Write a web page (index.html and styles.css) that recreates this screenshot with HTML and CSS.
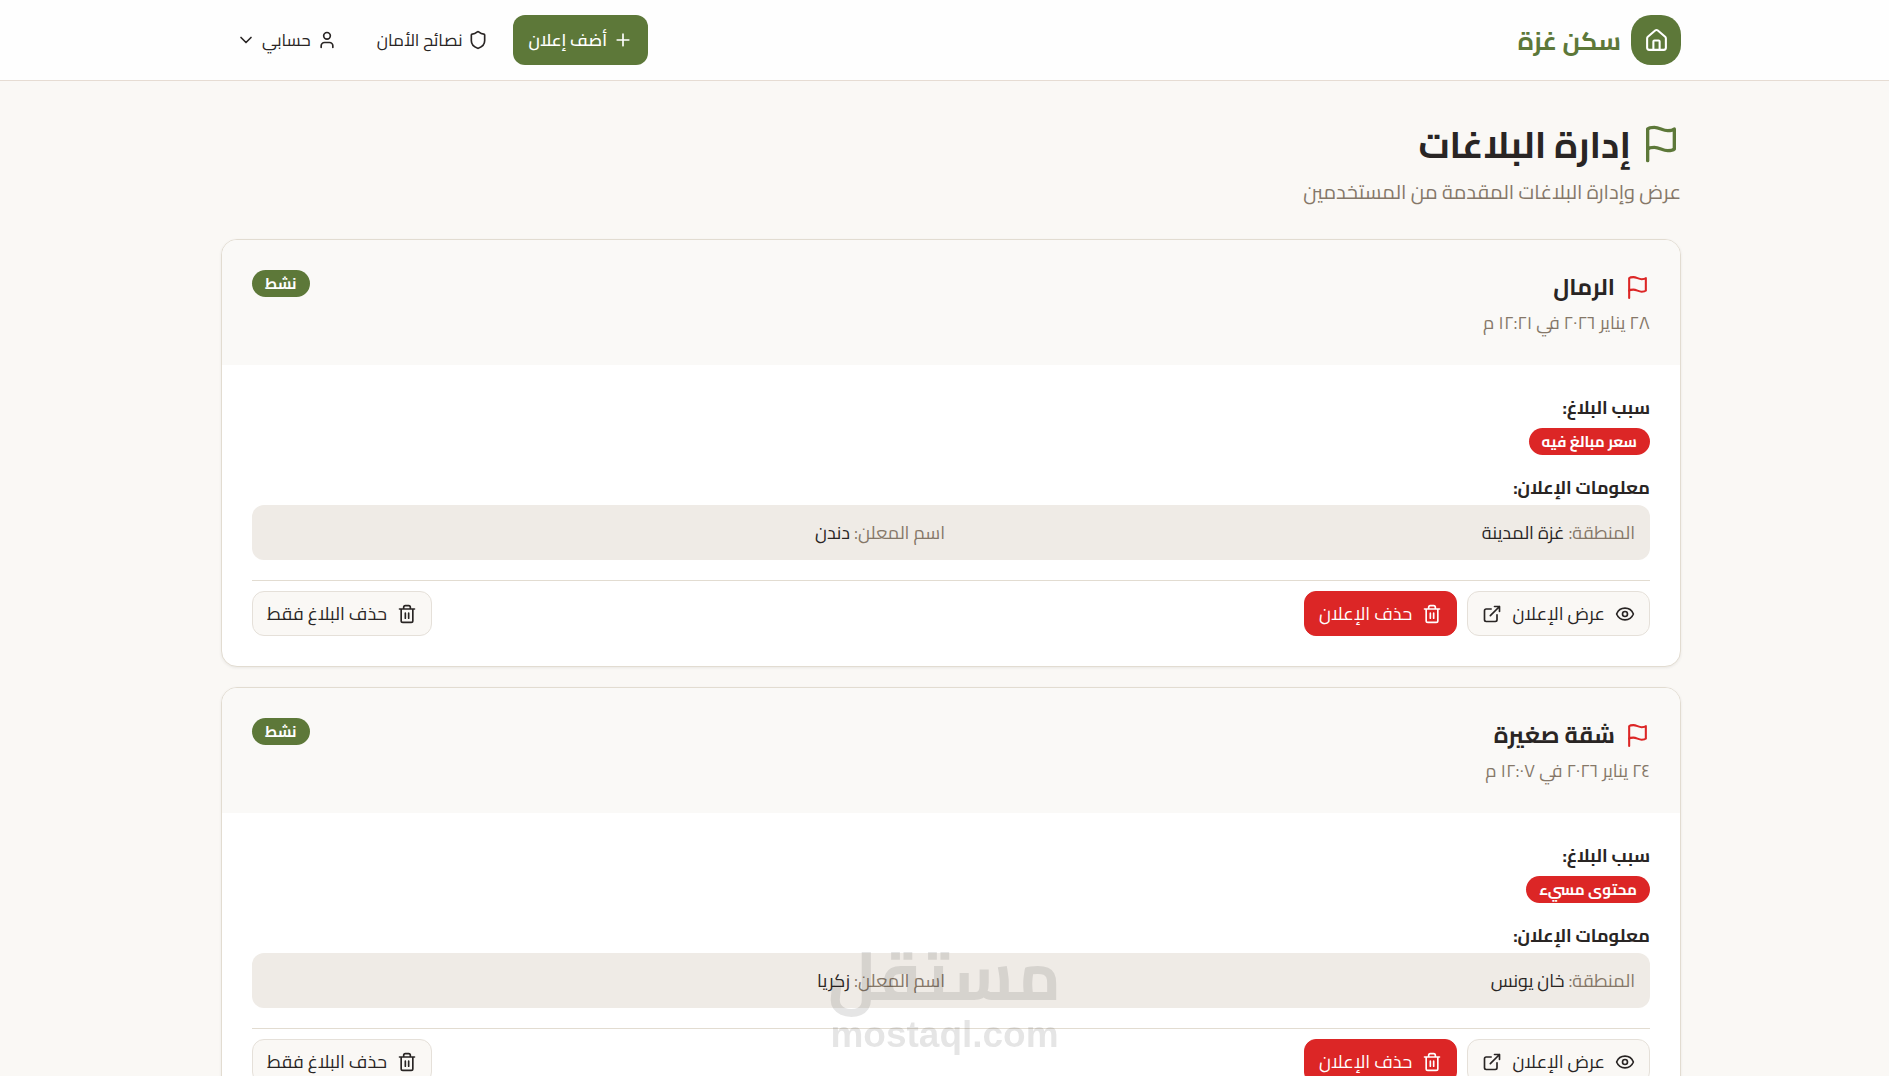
FILE: index.html
```html
<!DOCTYPE html>
<html lang="ar" dir="rtl">
<head>
<meta charset="utf-8">
<meta name="viewport" content="width=device-width, initial-scale=1">
<title>سكن غزة</title>
<link rel="stylesheet" href="styles.css">
</head>
<body>
<svg width="0" height="0" class="sprite" aria-hidden="true">
  <symbol id="flag" viewBox="0 0 24 24"><path d="M4 15s1-1 4-1 5 2 8 2 4-1 4-1V3s-1 1-4 1-5-2-8-2-4 1-4 1z"/><path d="M4 22v-7"/></symbol>
  <symbol id="home" viewBox="0 0 24 24"><path d="M15 21v-8a1 1 0 0 0-1-1h-4a1 1 0 0 0-1 1v8"/><path d="M3 10a2 2 0 0 1 .709-1.528l7-5.999a2 2 0 0 1 2.582 0l7 5.999A2 2 0 0 1 21 10v9a2 2 0 0 1-2 2H5a2 2 0 0 1-2-2z"/></symbol>
  <symbol id="plus" viewBox="0 0 24 24"><path d="M5 12h14M12 5v14"/></symbol>
  <symbol id="shield" viewBox="0 0 24 24"><path d="M20 13c0 5-3.500 7.500-7.660 8.950a1 1 0 0 1-.67-.01C7.500 20.500 4 18 4 13V6a1 1 0 0 1 1-1c2 0 4.500-1.200 6.240-2.720a1.170 1.170 0 0 1 1.520 0C14.510 3.810 17 5 19 5a1 1 0 0 1 1 1z"/></symbol>
  <symbol id="user" viewBox="0 0 24 24"><path d="M19 21v-2a4 4 0 0 0-4-4H9a4 4 0 0 0-4 4v2"/><circle cx="12" cy="7" r="4"/></symbol>
  <symbol id="chevron" viewBox="0 0 24 24"><path d="m6 9 6 6 6-6"/></symbol>
  <symbol id="eye" viewBox="0 0 24 24"><path d="M2.062 12.348a1 1 0 0 1 0-.696 10.750 10.750 0 0 1 19.876 0 1 1 0 0 1 0 .696 10.750 10.750 0 0 1-19.876 0"/><circle cx="12" cy="12" r="3"/></symbol>
  <symbol id="external" viewBox="0 0 24 24"><path d="M15 3h6v6M10 14 21 3M18 13v6a2 2 0 0 1-2 2H5a2 2 0 0 1-2-2V8a2 2 0 0 1 2-2h6"/></symbol>
  <symbol id="trash" viewBox="0 0 24 24"><path d="M3 6h18M19 6v14c0 1-1 2-2 2H7c-1 0-2-1-2-2V6M8 6V4c0-1 1-2 2-2h4c1 0 2 1 2 2v2M10 11v6M14 11v6"/></symbol>
</svg>

<header class="site-header gutter">
  <div class="container header-row">
    <a class="brand" href="#">
      <span class="brand-mark"><svg class="icon icon-md"><use href="#home"/></svg></span>
      <span class="brand-name">سكن غزة</span>
    </a>
    <nav class="nav">
      <a class="nav-add" href="#"><svg class="icon icon-sm"><use href="#plus"/></svg>أضف إعلان</a>
      <a class="nav-link" href="#"><svg class="icon icon-sm"><use href="#shield"/></svg>نصائح الأمان</a>
      <button class="nav-link" type="button"><svg class="icon icon-sm"><use href="#user"/></svg>حسابي<svg class="icon icon-sm"><use href="#chevron"/></svg></button>
    </nav>
  </div>
</header>

<main class="gutter">
  <div class="container page">
    <div class="page-head">
      <h1 class="page-title"><svg class="icon icon-xl"><use href="#flag"/></svg>إدارة البلاغات</h1>
      <p class="page-subtitle">عرض وإدارة البلاغات المقدمة من المستخدمين</p>
    </div>

    <article class="card">
      <div class="card-head">
        <div>
          <h2 class="card-title"><svg class="icon icon-md"><use href="#flag"/></svg>الرمال</h2>
          <p class="card-date">٢٨ يناير ٢٠٢٦ في ١٢:٢١ م</p>
        </div>
        <span class="badge badge-green">نشط</span>
      </div>
      <div class="card-body">
        <h3 class="label">سبب البلاغ:</h3>
        <span class="badge badge-red">سعر مبالغ فيه</span>
        <h3 class="label label-info">معلومات الإعلان:</h3>
        <div class="info">
          <div><span class="muted">المنطقة:</span> غزة المدينة</div>
          <div><span class="muted">اسم المعلن:</span> دندن</div>
        </div>
        <div class="actions">
          <button class="btn" type="button"><svg class="icon icon-sm"><use href="#eye"/></svg>عرض الإعلان<svg class="icon icon-sm"><use href="#external"/></svg></button>
          <button class="btn btn-red" type="button"><svg class="icon icon-sm"><use href="#trash"/></svg>حذف الإعلان</button>
          <button class="btn btn-end" type="button"><svg class="icon icon-sm"><use href="#trash"/></svg>حذف البلاغ فقط</button>
        </div>
      </div>
    </article>

    <article class="card">
      <div class="card-head">
        <div>
          <h2 class="card-title"><svg class="icon icon-md"><use href="#flag"/></svg>شقة صغيرة</h2>
          <p class="card-date">٢٤ يناير ٢٠٢٦ في ١٢:٠٧ م</p>
        </div>
        <span class="badge badge-green">نشط</span>
      </div>
      <div class="card-body">
        <h3 class="label">سبب البلاغ:</h3>
        <span class="badge badge-red">محتوى مسيء</span>
        <h3 class="label label-info">معلومات الإعلان:</h3>
        <div class="info">
          <div><span class="muted">المنطقة:</span> خان يونس</div>
          <div><span class="muted">اسم المعلن:</span> زكريا</div>
        </div>
        <div class="actions">
          <button class="btn" type="button"><svg class="icon icon-sm"><use href="#eye"/></svg>عرض الإعلان<svg class="icon icon-sm"><use href="#external"/></svg></button>
          <button class="btn btn-red" type="button"><svg class="icon icon-sm"><use href="#trash"/></svg>حذف الإعلان</button>
          <button class="btn btn-end" type="button"><svg class="icon icon-sm"><use href="#trash"/></svg>حذف البلاغ فقط</button>
        </div>
      </div>
    </article>
  </div>
</main>

<div class="watermark" aria-hidden="true">
  <span class="watermark-ar">مستقل</span>
  <span class="watermark-en">mostaql.com</span>
</div>
</body>
</html>
```

FILE: styles.css
```css
* { box-sizing: border-box; }

body {
  margin: 0;
  background: #faf8f5;
  color: #292524;
  font-family: Cairo, "Noto Sans Arabic", "DejaVu Sans", sans-serif;
  font-size: 18px;
  line-height: 25px;
}

h1, h2, h3, p { margin: 0; }
a { color: inherit; text-decoration: none; }
button { font: inherit; color: inherit; cursor: pointer; }

.sprite { position: absolute; }

.icon {
  flex: none;
  fill: none;
  stroke: currentColor;
  stroke-width: 2;
  stroke-linecap: round;
  stroke-linejoin: round;
}
.icon-sm { width: 20px; height: 20px; }
.icon-md { width: 25px; height: 25px; }
.icon-xl { width: 40px; height: 40px; }

.gutter { padding-left: 13px; }
.container {
  max-width: 1500px;
  margin: 0 auto;
  padding: 0 20px;
}

.site-header {
  background: #fefefe;
  border-bottom: 1px solid #e6dcd3;
}
.header-row {
  display: flex;
  align-items: center;
  justify-content: space-between;
  height: 80px;
}
.brand { display: flex; align-items: center; gap: 10px; color: #5d7839; }
.brand-mark {
  display: grid;
  place-items: center;
  width: 50px;
  height: 50px;
  border-radius: 20px;
  background: #5d7839;
  color: #fff;
}
.brand-name { font-size: 25px; font-weight: 700; }

.nav { display: flex; align-items: center; gap: 10px; }
.nav-add, .nav-link {
  display: flex;
  align-items: center;
  gap: 6px;
  height: 50px;
  padding: 0 15px;
  border: 0;
  border-radius: 12px;
  background: none;
  font-size: 17px;
}
.nav-add { background: #5d7839; color: #fff; font-weight: 600; }

.page { padding-top: 40px; }
.page-head { margin-bottom: 33px; }
.page-title {
  display: flex;
  align-items: center;
  gap: 10px;
  height: 46px;
  font-size: 37px;
  font-weight: 700;
}
.page-title .icon { color: #5d7839; }
.page-subtitle { margin-top: 11px; font-size: 20px; line-height: 28px; color: #857768; }

.card {
  margin-bottom: 20px;
  border: 1px solid #e2dcd1;
  border-radius: 16px;
  background: #fff;
  box-shadow: 0 1px 3px rgba(41, 37, 36, .08);
  overflow: hidden;
}
.card-head {
  display: flex;
  align-items: flex-start;
  justify-content: space-between;
  padding: 30px;
  background: #faf9f7;
}
.card-title {
  display: flex;
  align-items: center;
  gap: 10px;
  font-size: 23px;
  line-height: 34px;
  font-weight: 700;
}
.card-title .icon { color: #dc2626; }
.card-date { margin-top: 6px; color: #857768; }

.badge {
  display: block;
  width: fit-content;
  padding: 0 13px;
  border-radius: 999px;
  font-size: 15px;
  line-height: 27px;
  font-weight: 700;
  color: #fff;
}
.badge-green { background: #5d7839; }
.badge-red { background: #dc2626; }

.card-body { padding: 30px; }
.label { margin-bottom: 8px; font-size: 18px; font-weight: 700; }
.label-info { margin: 20px 0 5px; }
.info {
  display: grid;
  grid-template-columns: 1fr 1fr;
  gap: 12px;
  padding: 15px;
  border-radius: 12px;
  background: #efebe6;
}
.muted { color: #857768; }

.actions {
  display: flex;
  gap: 10px;
  margin-top: 20px;
  padding-top: 10px;
  border-top: 1px solid #e2dcd1;
}
.btn {
  display: flex;
  align-items: center;
  gap: 10px;
  height: 45px;
  padding: 0 14px;
  border: 1px solid #e5e0d9;
  border-radius: 12px;
  background: #faf8f5;
}
.btn-red { border-color: #dc2626; background: #dc2626; color: #fff; }
.btn-end { margin-right: auto; }

.watermark {
  position: fixed;
  bottom: 16px;
  left: 50%;
  display: flex;
  flex-direction: column;
  align-items: center;
  transform: translateX(-50%);
  color: #000;
  opacity: .1;
  pointer-events: none;
}
.watermark-ar { font-size: 68px; line-height: 70px; font-weight: 700; }
.watermark-en { font-family: "Liberation Sans", sans-serif; font-size: 37px; line-height: 50px; font-weight: 700; }
```
